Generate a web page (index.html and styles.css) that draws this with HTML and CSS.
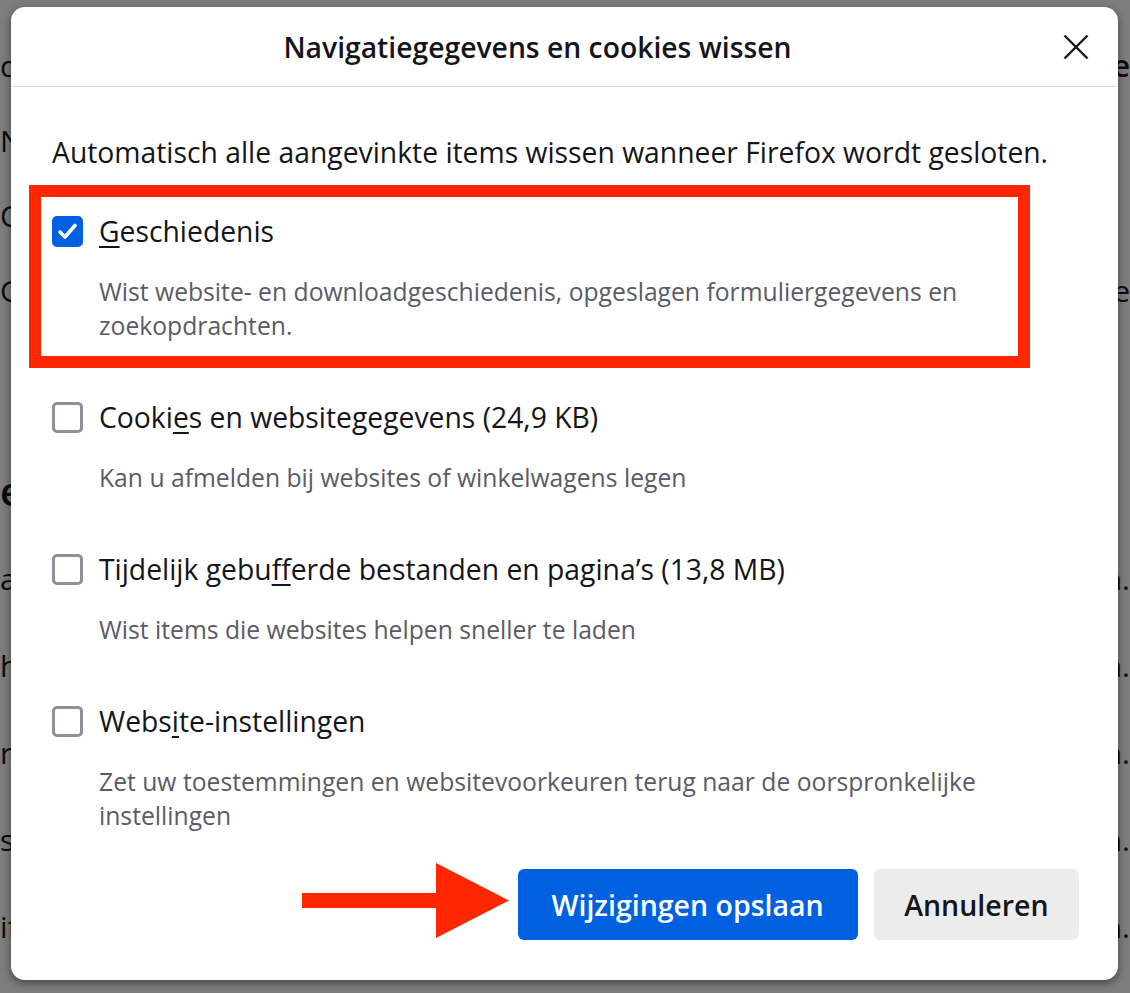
FILE: index.html
```html
<!DOCTYPE html>
<html lang="nl">
<head>
  <meta charset="UTF-8" />
  <meta name="viewport" content="width=device-width, initial-scale=1.0"/>
  <title>Navigatiegegevens en cookies wissen</title>
  <link rel="stylesheet" href="styles.css">
</head>
<body>
  <!-- Settings page behind the dialog -->
  <div class="page">
    <div class="page-row"><span class="left">d</span><span class="right bold">se</span></div>
    <div class="page-row"><span class="left">Na</span><span class="right"></span></div>
    <div class="page-row"><span class="left">Co</span><span class="right"></span></div>
    <div class="page-row"><span class="left">Ge</span><span class="right">e</span></div>
    <div class="page-row heading"><span class="left">e</span><span class="right"></span></div>
    <div class="page-row lower"><span class="left">at</span><span class="right">n.</span></div>
    <div class="page-row lower"><span class="left">he</span><span class="right">n.</span></div>
    <div class="page-row lower"><span class="left">ro</span><span class="right">n.</span></div>
    <div class="page-row lower"><span class="left">s</span><span class="right">n.</span></div>
    <div class="page-row lower"><span class="left">if</span><span class="right">n.</span></div>
  </div>

  <div class="dialog">
    <header class="dialog-header">
      <h1>Navigatiegegevens en cookies wissen</h1>
      <button class="close" aria-label="Sluiten">
        <svg width="26" height="26" viewBox="0 0 26 26"><path d="M1.5 1.5 L24.5 24.5 M24.5 1.5 L1.5 24.5" stroke="#15141a" stroke-width="2.4" fill="none"/></svg>
      </button>
    </header>

    <div class="dialog-body">
      <p class="intro">Automatisch alle aangevinkte items wissen wanneer Firefox wordt gesloten.</p>

      <div class="options">
        <label class="option highlighted">
          <span class="option-row">
            <span class="checkbox checked">
              <svg width="23" height="23" viewBox="0 0 23 23"><path d="M4 12 L9 17 L19 5.5" stroke="#fff" stroke-width="3.6" fill="none" stroke-linecap="round" stroke-linejoin="round"/></svg>
            </span>
            <span class="option-label"><u>G</u>eschiedenis</span>
          </span>
          <span class="option-desc">Wist website- en downloadgeschiedenis, opgeslagen formuliergegevens en zoekopdrachten.</span>
        </label>

        <label class="option">
          <span class="option-row">
            <span class="checkbox"></span>
            <span class="option-label">Cooki<u>e</u>s en websitegegevens (24,9 KB)</span>
          </span>
          <span class="option-desc">Kan u afmelden bij websites of winkelwagens legen</span>
        </label>

        <label class="option">
          <span class="option-row">
            <span class="checkbox"></span>
            <span class="option-label">Tijdelijk gebu<u>f</u>ferde bestanden en pagina’s (13,8 MB)</span>
          </span>
          <span class="option-desc">Wist items die websites helpen sneller te laden</span>
        </label>

        <label class="option">
          <span class="option-row">
            <span class="checkbox"></span>
            <span class="option-label">Webs<u>i</u>te-instellingen</span>
          </span>
          <span class="option-desc">Zet uw toestemmingen en websitevoorkeuren terug naar de oorspronkelijke instellingen</span>
        </label>
      </div>
    </div>

    <footer class="dialog-footer">
      <svg class="arrow" width="207" height="75" viewBox="0 0 207 75"><path d="M0 30 H134 V0 L207 37.5 L134 75 V45 H0 Z" fill="#ff2600"/></svg>
      <button class="btn primary">Wijzigingen opslaan</button>
      <button class="btn secondary">Annuleren</button>
    </footer>
  </div>
</body>
</html>
```

FILE: styles.css
```css
body {
  font-family: 'Open Sans', 'Noto Sans', sans-serif;
  background: #7d7d7d;
  margin: 0;
  padding: 0;
  width: 1130px;
  height: 993px;
  overflow: hidden;
  position: relative;
  color: #15141a;
}

/* page behind the modal */
.page {
  display: flex;
  flex-direction: column;
  gap: 41px;
  padding-top: 48px;
}
.page-row {
  height: 34px;
  display: flex;
  justify-content: space-between;
  align-items: center;
  font-size: 30px;
  color: #0c0c0d;
  white-space: nowrap;
}
.page-row.heading {
  height: 50px;
  margin-top: 117px;
  font-size: 40px;
  font-weight: 600;
}
.page-row.lower { margin-top: 12px; }
.page-row.heading + .page-row.lower { margin-top: 5px; }
.page-row .bold { font-weight: 600; }

/* dialog */
.dialog {
  position: absolute;
  top: 7px;
  left: 11px;
  width: 1107px;
  height: 973px;
  background: #fff;
  border-radius: 14px;
  box-shadow: 0 3px 8px rgba(0, 0, 0, 0.45);
  display: flex;
  flex-direction: column;
}
.dialog-header {
  height: 80px;
  display: flex;
  align-items: center;
  border-bottom: 1px solid #d7d7db;
  box-sizing: border-box;
}
.dialog-header h1 {
  flex: 1;
  margin: 0;
  padding-left: 4px;
  text-align: center;
  font-size: 28.3px;
  font-weight: 600;
}
.close {
  width: 32px;
  height: 32px;
  margin-right: 26px;
  padding: 0;
  border: none;
  background: none;
  display: flex;
  align-items: center;
  justify-content: center;
}

.dialog-body {
  padding: 0 30px;
}
.intro {
  margin: 48px 0 28px;
  padding-left: 11px;
  font-size: 28.3px;
  line-height: 34px;
}
.options {
  display: flex;
  flex-direction: column;
  gap: 27px;
}
.option {
  display: flex;
  flex-direction: column;
  padding: 17px 11px 13px;
  margin-right: 70px;
}
.option.highlighted {
  outline: 12px solid #ff2600;
}
.option-row {
  display: flex;
  align-items: center;
  gap: 16px;
  height: 34px;
}
.checkbox {
  width: 31px;
  height: 31px;
  box-sizing: border-box;
  border: 3px solid #8f8f9d;
  border-radius: 5px;
  display: flex;
  align-items: center;
  justify-content: center;
  flex-shrink: 0;
}
.checkbox.checked {
  background: #0061e0;
  border-color: #0061e0;
}
.option-label {
  font-size: 28.3px;
}
.option-label u {
  text-underline-offset: 4px;
  text-decoration-thickness: 2px;
}
.option-desc {
  margin-top: 27px;
  padding-left: 47px;
  font-size: 24.7px;
  line-height: 34px;
  color: #5b5b66;
}

.dialog-footer {
  margin-top: auto;
  padding: 0 39px 40px 0;
  display: flex;
  justify-content: flex-end;
  align-items: center;
  gap: 16px;
}
.arrow {
  margin-right: -7px;
  margin-top: -8px;
}
.btn {
  height: 71px;
  padding: 0 33px;
  border: none;
  border-radius: 6px;
  font-family: inherit;
  font-size: 28.5px;
  font-weight: 600;
}
.btn.primary {
  background: #0061e0;
  color: #fff;
  padding: 0 34px;
}
.btn.secondary {
  background: #ececed;
  color: #15141a;
  padding: 0 30.5px;
}
```
